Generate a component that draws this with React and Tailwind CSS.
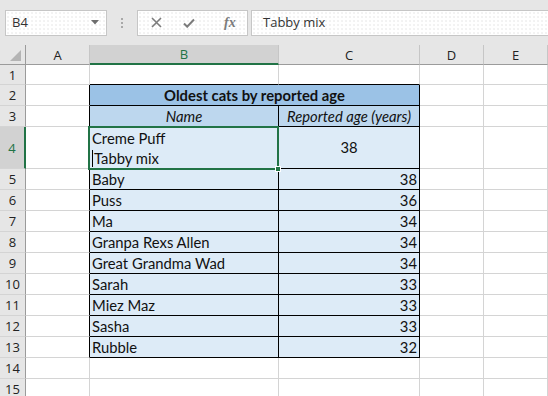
const COLS = "grid grid-cols-[26px_64px_189px_141px_64px_64px_1fr]";
const CELL_FONT = "font-['Lato','Carlito','Liberation_Sans',sans-serif] text-[14.8px] leading-[17px]";
const UI_FONT = "font-['Open_Sans','Noto_Sans',sans-serif]";

const cats = [
  ["Baby", 38],
  ["Puss", 36],
  ["Ma", 34],
  ["Granpa Rexs Allen", 34],
  ["Great Grandma Wad", 34],
  ["Sarah", 33],
  ["Miez Maz", 33],
  ["Sasha", 33],
  ["Rubble", 32],
];

function RowHead({ n, active }) {
  return (
    <div
      className={`${UI_FONT} flex items-center justify-center overflow-hidden border-b border-b-[#d4d4d4] text-[13px] leading-[18px] ${
        active
          ? "border-r-2 border-r-[#217346] bg-[#d2d2d2] text-[#217346]"
          : "border-r border-r-[#9b9b9b] bg-[#e6e6e6] text-[#222]"
      }`}
    >
      {n}
    </div>
  );
}

function Grid({ className = "", children }) {
  return <div className={`border-r border-b border-[#d4d4d4] ${className}`}>{children}</div>;
}

function Toolbar() {
  return (
    <div className={`${UI_FONT} flex h-[45px] items-center bg-[#e6e6e6] text-[13px] text-[#333]`}>
      <div className="ml-[5px] flex h-[26px] w-[102px] items-center justify-between border border-[#c6c6c6] bg-white bg-[radial-gradient(#e4e4e4_0.6px,transparent_0.8px)] bg-[length:4px_4px] pl-[6px] pr-[7px]">
        <span>B4</span>
        <svg width="8" height="5" viewBox="0 0 8 5">
          <path d="M0 0h8L4 4.5z" fill="#6d6d6d" />
        </svg>
      </div>
      <div className="mx-[14px] flex flex-col gap-[2px]">
        <span className="h-[2px] w-[2px] bg-[#a8a8a8]" />
        <span className="h-[2px] w-[2px] bg-[#a8a8a8]" />
        <span className="h-[2px] w-[2px] bg-[#a8a8a8]" />
      </div>
      <div className="flex h-[26px] w-[111px] items-center border border-[#c6c6c6] bg-white bg-[radial-gradient(#e4e4e4_0.6px,transparent_0.8px)] bg-[length:4px_4px]">
        <svg className="ml-[13px]" width="11" height="11" viewBox="0 0 11 11">
          <path d="M1 1l9 9M10 1l-9 9" stroke="#7b7b7b" strokeWidth="1.6" />
        </svg>
        <svg className="ml-[21px]" width="12" height="10" viewBox="0 0 12 10">
          <path d="M1 5.5l3.2 3.2L11 1.5" stroke="#7b7b7b" strokeWidth="2" fill="none" />
        </svg>
        <span className="ml-[29px] font-['Liberation_Serif',serif] text-[14px] italic font-bold text-[#7b7b7b]">
          fx
        </span>
      </div>
      <div className="ml-[3px] flex h-[26px] flex-1 items-center border-y border-l border-[#c6c6c6] bg-white bg-[radial-gradient(#e4e4e4_0.6px,transparent_0.8px)] bg-[length:4px_4px] pl-[11px]">
        Tabby mix
      </div>
    </div>
  );
}

function ColumnHeader() {
  const head = "flex items-center justify-center border-r border-b border-r-[#c6c6c6] border-b-[#9b9b9b] bg-[#e6e6e6] text-[#222]";
  return (
    <div className={`${COLS} ${UI_FONT} h-[20px] text-[13px] leading-[18px]`}>
      <div className="relative border-r border-b border-r-[#9b9b9b] border-b-[#9b9b9b] bg-[#e6e6e6]">
        <svg className="absolute right-[4px] bottom-[3px]" width="11" height="11" viewBox="0 0 11 11">
          <path d="M11 0V11H0z" fill="#b4b4b4" />
        </svg>
      </div>
      <div className={head}>A</div>
      <div className="flex items-center justify-center border-r border-b-2 border-r-[#c6c6c6] border-b-[#217346] bg-[#d2d2d2] text-[#217346]">
        B
      </div>
      <div className={head}>C</div>
      <div className={head}>D</div>
      <div className={head}>E</div>
      <div className="border-b border-b-[#9b9b9b] bg-[#e6e6e6]" />
    </div>
  );
}

function EmptyRow({ n }) {
  return (
    <div className={`${COLS} h-[21px]`}>
      <RowHead n={n} />
      <Grid />
      <Grid />
      <Grid />
      <Grid />
      <Grid />
      <div className="border-b border-[#d4d4d4]" />
    </div>
  );
}

export default function App() {
  return (
    <div className="relative h-[396px] w-[548px] overflow-hidden bg-white">
      <Toolbar />
      <ColumnHeader />
      <div className={`${CELL_FONT} text-[#111]`}>
        <div className={`${COLS} h-[20px]`}>
          <RowHead n={1} />
          <Grid />
          <div className="border-r border-b border-r-[#d4d4d4] border-b-black" />
          <div className="border-r border-b border-r-[#d4d4d4] border-b-black" />
          <Grid />
          <Grid />
          <div className="border-b border-[#d4d4d4]" />
        </div>
        <div className={`${COLS} h-[21px]`}>
          <RowHead n={2} />
          <div className="border-r border-b border-r-black border-b-[#d4d4d4]" />
          <div className="col-span-2 flex items-end justify-center border-r border-b border-black bg-[#9bc2e6] pb-[1px] font-bold">
            Oldest cats by reported age
          </div>
          <Grid />
          <Grid />
          <div className="border-b border-[#d4d4d4]" />
        </div>
        <div className={`${COLS} h-[21px]`}>
          <RowHead n={3} />
          <div className="border-r border-b border-r-black border-b-[#d4d4d4]" />
          <div className="flex items-end justify-center border-r border-b border-black bg-[#bdd7ee] pb-[1px] italic">
            Name
          </div>
          <div className="flex items-end justify-center overflow-hidden whitespace-nowrap border-r border-b border-black bg-[#bdd7ee] pb-[1px] italic">
            Reported age (years)
          </div>
          <Grid />
          <Grid />
          <div className="border-b border-[#d4d4d4]" />
        </div>
        <div className={`${COLS} h-[42px]`}>
          <RowHead n={4} active />
          <div className="border-r border-b border-r-black border-b-[#d4d4d4]" />
          <div className="flex flex-col justify-end border-r border-b border-black bg-[#ddebf7] pl-[2px] leading-[20px]">
            <span>Creme Puff</span>
            <span className="flex items-center">
              <span className="mr-[1px] inline-block h-[17px] w-px bg-black" />
              Tabby mix
            </span>
          </div>
          <div className="flex items-center justify-center border-r border-b border-black bg-[#ddebf7]">38</div>
          <Grid />
          <Grid />
          <div className="border-b border-[#d4d4d4]" />
        </div>
        {cats.map(([name, age], i) => (
          <div key={name} className={`${COLS} h-[21px]`}>
            <RowHead n={i + 5} />
            <div className="border-r border-b border-r-black border-b-[#d4d4d4]" />
            <div className="flex items-end border-r border-b border-black bg-[#ddebf7] pb-[1px] pl-[2px]">{name}</div>
            <div className="flex items-end justify-end border-r border-b border-black bg-[#ddebf7] pb-[1px] pr-[2px]">
              {age}
            </div>
            <Grid />
            <Grid />
            <div className="border-b border-[#d4d4d4]" />
          </div>
        ))}
        <EmptyRow n={14} />
        <EmptyRow n={15} />
      </div>
      {/* active cell outline + fill handle */}
      <div className="pointer-events-none absolute top-[126px] left-[88px] h-[44px] w-[191px] border-2 border-[#217346]" />
      <div className="pointer-events-none absolute top-[166px] left-[275px] h-[6px] w-[6px] border border-white bg-[#217346]" />
    </div>
  );
}
